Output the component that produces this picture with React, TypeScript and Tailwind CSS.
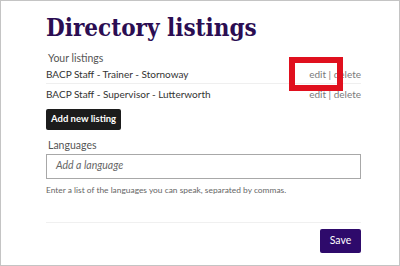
import React from "react";

const sans = { fontFamily: "Lato, 'Open Sans', sans-serif" };

export default function App() {
  return (
    <div className="relative w-[400px] h-[266px] overflow-hidden border border-[#c4c4c4] bg-white" style={sans}>
      <div className="ml-[45px] w-[315px] pt-[10px]">
        <h1
          className="text-[24px] leading-[33px] font-bold text-[#2b0d52]"
          style={{ fontFamily: "'DejaVu Serif Condensed', 'DejaVu Serif', serif", fontStretch: "condensed" }}
        >
          Directory listings
        </h1>
        <div className="mt-[7px] pl-[2px] text-[10.5px] leading-[14px] text-[#555]">Your listings</div>
        <div className="flex items-center justify-between h-[19px] border-b border-[#efefef] text-[10px] text-[#333]">
          <span>BACP Staff - Trainer - Stornoway</span>
          <span className="text-[#7a7a7a]">edit | delete</span>
        </div>
        <div className="flex items-center justify-between h-[20px] text-[10px] text-[#333]">
          <span>BACP Staff - Supervisor - Lutterworth</span>
          <span className="text-[#7a7a7a]">edit | delete</span>
        </div>
        <button className="h-[21px] px-[5px] rounded-[2px] bg-[#1c1c1c] text-white text-[9.5px] font-bold">
          Add new listing
        </button>
        <div className="mt-[8px] pl-[2px] text-[10.5px] leading-[14px] text-[#555]">Languages</div>
        <div className="mt-[2px] h-[25px] border-[1.5px] border-[#a8a8a8] flex items-center pl-[9px]">
          <span className="italic text-[10.5px] text-[#666]">Add a language</span>
        </div>
        <div className="mt-[5px] text-[8.4px] leading-[12px] text-[#666]">
          Enter a list of the languages you can speak, separated by commas.
        </div>
        <div className="mt-[26px] border-t border-[#f0f0f0]"></div>
        <div className="flex justify-end pt-[6px]">
          <button className="w-[41px] h-[24px] rounded-[2px] bg-[#2e0a6b] text-white text-[10.5px]">
            Save
          </button>
        </div>
      </div>
      <div className="absolute left-[288px] top-[56px] w-[54px] h-[34px] border-[6px] border-[#e0101e]"></div>
    </div>
  );
}
